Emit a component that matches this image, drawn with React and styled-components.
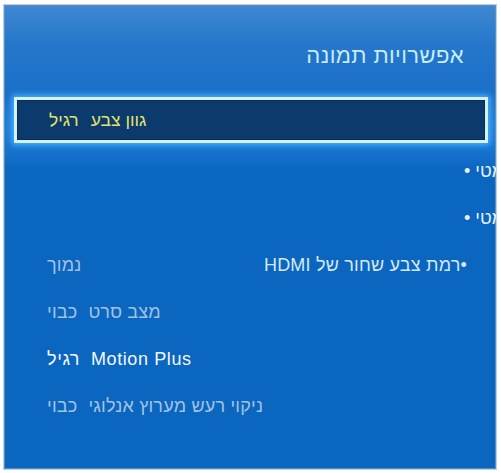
import React from 'react'
import styled, { createGlobalStyle } from 'styled-components'

const GlobalStyle = createGlobalStyle`
	html, body {
		margin: 0;
		padding: 0;
		background: #ffffff;
	}
	body {
		font-family: 'Liberation Sans', Arial, sans-serif;
	}
`

const Frame = styled.div`
	width: 501px;
	height: 473px;
	padding: 4px 4px 0 3px;
	box-sizing: border-box;
`

const Panel = styled.div`
	width: 494px;
	height: 466px;
	box-sizing: border-box;
	border: 1px solid #b9cfe4;
	box-shadow: inset 0 0 0 1px #5b8fc4;
	background: linear-gradient(
		180deg,
		#3f88d2 0px,
		#2577cb 40px,
		#1a6fc9 90px,
		#1f7fd8 120px,
		#1570cc 150px,
		#0a66bf 165px,
		#0a66bf 100%
	);
	overflow: hidden;
	display: flex;
	flex-direction: column;
`

const Header = styled.div`
	height: 92px;
	box-sizing: border-box;
	padding: 10px 32px 0 0;
	display: flex;
	justify-content: flex-end;
	align-items: center;
`

const Title = styled.h1`
	margin: 0;
	font-size: 22px;
	letter-spacing: 0.4px;
	font-weight: normal;
	color: #c9ecff;
	direction: rtl;
`

const Highlight = styled.div`
	margin: 0 8px 0 10px;
	height: 46px;
	box-sizing: border-box;
	border: 3px solid #d6f1ff;
	box-shadow: 0 0 6px 2px #48b4ff, inset 0 0 0 1px #0a2c55;
	background: #0b3a6d;
	display: flex;
	direction: rtl;
	justify-content: flex-end;
	align-items: center;
	gap: 12px;
	padding-left: 32px;
	font-size: 17.5px;
	color: #e4e26a;
`

const List = styled.div`
	margin-top: 5px;
	display: flex;
	flex-direction: column;
`

const Row = styled.div`
	height: 47px;
	display: flex;
	align-items: center;
	direction: rtl;
	justify-content: ${(p) => (p.$spread ? 'space-between' : 'flex-end')};
	gap: 11px;
	padding: 0 29px 0 43px;
	font-size: 18px;
	letter-spacing: ${(p) => (p.$active ? '0.6px' : '0.2px')};
	white-space: nowrap;
	color: ${(p) => (p.$active ? '#f4f8ff' : '#a3c2e3')};
`

const Clipped = styled.div`
	height: 47px;
	display: flex;
	align-items: center;
	padding-left: 460px;
	font-size: 18px;
	white-space: nowrap;
	color: #e8f2ff;
`

const Bulleted = styled.span`
	direction: rtl;
	color: ${(p) => p.$color || 'inherit'};
`

const App = () => (
	<>
		<GlobalStyle />
		<Frame>
			<Panel>
				<Header>
					<Title>אפשרויות תמונה</Title>
				</Header>
				<Highlight>
					<span>גוון צבע</span>
					<span>רגיל</span>
				</Highlight>
				<List>
					<Clipped>
						<Bulleted>אוטומטי •</Bulleted>
					</Clipped>
					<Clipped>
						<Bulleted>אוטומטי •</Bulleted>
					</Clipped>
					<Row $spread>
						<Bulleted $color="#d6e8fa">•רמת צבע שחור של HDMI</Bulleted>
						<span>נמוך</span>
					</Row>
					<Row>
						<span>מצב סרט</span>
						<span>כבוי</span>
					</Row>
					<Row $active>
						<span>Motion Plus</span>
						<span>רגיל</span>
					</Row>
					<Row>
						<span>ניקוי רעש מערוץ אנלוגי</span>
						<span>כבוי</span>
					</Row>
				</List>
			</Panel>
		</Frame>
	</>
)

export default App
